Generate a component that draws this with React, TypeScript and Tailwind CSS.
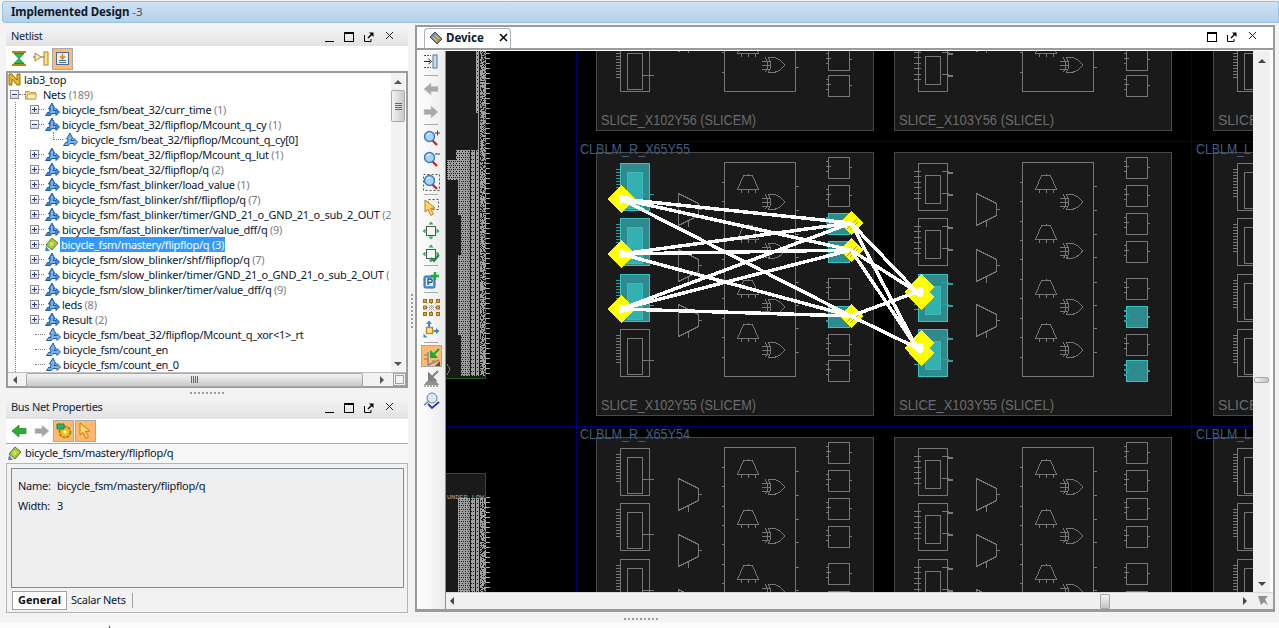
import React from "react";

const FONT = "[font-family:'Noto_Sans','Liberation_Sans',sans-serif]";

/* ---------- small icons ---------- */
function NetIcon({ leaf = false, bus = false }: { leaf?: boolean; bus?: boolean }) {
  const fill = bus ? "#a8c83c" : leaf ? "#7fb4ea" : "#3f8ad8";
  const stroke = bus ? "#5f7f1c" : "#1c5aa6";
  if (bus) {
    return (
      <svg width="14" height="15" viewBox="0 0 14 15" className="shrink-0">
        <path d="M7 1 L13 6 L7 13 L1 8 Z" fill={fill} stroke={stroke} />
        <path d="M5 6h4M5 8h3" stroke="#e8f4b0" fill="none" />
        <path d="M1 9 L0 14 L5 14 Z" fill="#3f8ad8" />
      </svg>
    );
  }
  return (
    <svg width="15" height="15" viewBox="0 0 15 15" className="shrink-0">
      <path d="M0.5 13.5 L3 10 L4.5 11 L5 7 L3.5 7 L7 1 L10 7 L8.5 7 L8 8.5 L11 8.5 L11 6.5 L14.5 10 L11 13.5 L11 11.5 L7 11.5 L5.5 13.5 Z" fill={fill} stroke={stroke} strokeWidth="1" />
      {!leaf && <path d="M7 4v5M5 10h5" stroke="#b6dcff" fill="none" />}
    </svg>
  );
}

function Expander({ minus = false }: { minus?: boolean }) {
  return (
    <span className="relative w-[9px] h-[9px] shrink-0 border border-[#8c8c9c] bg-[linear-gradient(#ffffff,#d8d8e4)] flex items-center justify-center">
      <span className="block w-[5px] h-[1px] bg-[#28408c]" />
      {!minus && <span className="absolute left-[3px] top-[1px] w-[1px] h-[5px] bg-[#28408c]" />}
    </span>
  );
}

function WinButtons({ first = true }: { first?: boolean }) {
  return (
    <div className="flex items-center h-full">
      {first && <span className="block w-[9px] h-[1px] bg-black mt-[10px] mr-[10px]" />}
      <span className="block w-[10px] h-[10px] border border-black border-t-2 mr-[10px]" />
      <svg width="10" height="10" viewBox="0 0 10 10" className="mr-[11px]">
        <path d="M0.5 3v6.500h6.500V7" stroke="#000" fill="none" />
        <path d="M4 6 L8 2" stroke="#000" strokeWidth="1.400" />
        <path d="M5 0.500h4.500V5 Z" fill="#000" />
      </svg>
      <svg width="9" height="9" viewBox="0 0 9 9" className="mr-[14px] -mt-[2px]">
        <path d="M1 1 L8 8 M8 1 L1 8" stroke="#222" strokeWidth="1" />
      </svg>
    </div>
  );
}

function PanelHeader({ title, className = "h-[19px]" }: { title: string; className?: string }) {
  return (
    <div className={`flex items-center justify-between bg-[linear-gradient(#f4f4f4,#e2e2e2)] pl-[5px] text-[11px] tracking-[-0.3px] text-[#14243f] ${className}`}>
      <span>{title}</span>
      <WinButtons />
    </div>
  );
}

function ArrowIcon({ color, dark, left }: { color: string; dark: string; left: boolean }) {
  return (
    <svg width="16" height="14" viewBox="0 0 16 14">
      <path
        d={left ? "M1 7 L8 1 L8 4.500 L15 4.500 L15 9.500 L8 9.500 L8 13 Z" : "M15 7 L8 1 L8 4.500 L1 4.500 L1 9.500 L8 9.500 L8 13 Z"}
        fill={color}
        stroke={dark}
        strokeWidth="0.700"
      />
    </svg>
  );
}

function Magnifier({ sign }: { sign: "+" | "-" | "fit" }) {
  return (
    <svg width="17" height="17" viewBox="0 0 17 17">
      {sign === "fit" && <rect x="0.500" y="0.500" width="16" height="16" fill="none" stroke="#555" strokeDasharray="2 2" />}
      <path d="M9 10 L14 15" stroke="#c8281e" strokeWidth="2.400" />
      <circle cx="6.500" cy="6.500" r="5" fill="#a8d4f4" stroke="#3c78c0" strokeWidth="1.400" />
      <path d="M4 5 Q5 3.500 7 3.500" stroke="#fff" fill="none" />
      {sign === "+" && <path d="M12 3h5M14.500 0.500v5" stroke="#444" />}
      {sign === "-" && <path d="M12 3h5" stroke="#444" />}
    </svg>
  );
}

function Cursor({ dashed = false }: { dashed?: boolean }) {
  return (
    <svg width="16" height="18" viewBox="0 0 16 18">
      {dashed && <rect x="5.500" y="0.500" width="10" height="10" fill="none" stroke="#555" strokeDasharray="2 2" />}
      <path d="M2 1 L2 13 L5 10.500 L8 16.500 L10.500 15 L7.500 9.500 L12 9 Z" fill="#ffd866" stroke="#c87818" />
    </svg>
  );
}

function FitIcon({ check = false }: { check?: boolean }) {
  return (
    <svg width="18" height="19" viewBox="0 0 18 19">
      <rect x="4.500" y="5.500" width="9" height="9" fill="#f4f4f4" stroke="#555" />
      <path d="M9 0.500 L11.500 3.500 L6.500 3.500 Z M9 18.500 L11.500 15.500 L6.500 15.500 Z M0.500 10 L3.500 7.500 L3.500 12.500 Z M17.500 10 L14.500 7.500 L14.500 12.500 Z" fill="#1cb44c" />
      {check && <path d="M9 14 L12 17 L17 11" stroke="#1c8c3c" strokeWidth="2" fill="none" />}
    </svg>
  );
}

function ToolIcon({ kind }: { kind: string }) {
  switch (kind) {
    case "pin":
      return (
        <svg width="14" height="15" viewBox="0 0 14 15">
          <rect x="9" y="1" width="4" height="13" fill="#c8dcf0" stroke="#5878a8" />
          <path d="M0 7.500h6" stroke="#222" />
          <path d="M4.500 5 L7.500 7.500 L4.500 10" stroke="#222" fill="none" />
          <path d="M0 1.500h7M0 13.500h7" stroke="#555" strokeDasharray="2 1" />
        </svg>
      );
    case "left":
      return <ArrowIcon color="#a8a8a8" dark="#c8c8c8" left />;
    case "right":
      return <ArrowIcon color="#a8a8a8" dark="#c8c8c8" left={false} />;
    case "zin":
      return <Magnifier sign="+" />;
    case "zout":
      return <Magnifier sign="-" />;
    case "zfit":
      return <Magnifier sign="fit" />;
    case "select":
      return <Cursor dashed />;
    case "fit":
      return <FitIcon />;
    case "fitc":
      return <FitIcon check />;
    case "prop":
      return (
        <svg width="17" height="18" viewBox="0 0 17 18">
          <rect x="1" y="5" width="11" height="12" rx="1.500" fill="#5c9ce0" stroke="#2c64b0" />
          <rect x="3" y="7" width="7" height="8" fill="#e4f0fc" />
          <path d="M5 14V8h2.500a1.500 1.500 0 0 1 0 3.500H5" stroke="#1c4c98" fill="none" strokeWidth="1.300" />
          <path d="M12 1v8M8 5h8" stroke="#18b040" strokeWidth="2.400" />
        </svg>
      );
    case "nodes":
      return (
        <svg width="17" height="17" viewBox="0 0 17 17">
          <path d="M3 3 L14 14 M14 3 L3 14 M8.500 2v13M2 8.500h13" stroke="#888" strokeDasharray="1 1" />
          <g fill="#e8a830" stroke="#9c6c1c">
            <rect x="0.500" y="0.500" width="3" height="3" />
            <rect x="6.500" y="0.500" width="3" height="3" />
            <rect x="13.500" y="0.500" width="3" height="3" />
            <rect x="0.500" y="7" width="3" height="3" />
            <rect x="13.500" y="7" width="3" height="3" />
            <rect x="0.500" y="13.500" width="3" height="3" />
            <rect x="6.500" y="13.500" width="3" height="3" />
            <rect x="13.500" y="13.500" width="3" height="3" />
          </g>
        </svg>
      );
    case "move":
      return (
        <svg width="17" height="18" viewBox="0 0 17 18">
          <path d="M6 0.500 L9 4 L7 4 L7 7 L5 7 L5 4 L3 4 Z" fill="#3c88d8" />
          <path d="M16.500 11 L13 8 L13 10 L10.500 10 L10.500 12 L13 12 L13 14 Z" fill="#3c88d8" />
          <path d="M0.500 17.500 L0.500 13.500 L4.500 17.500 Z" fill="#3c88d8" />
          <rect x="3.500" y="7.500" width="6" height="6" fill="#ffe890" stroke="#b88c20" strokeWidth="1.400" />
        </svg>
      );
    case "route":
      return (
        <svg width="19" height="19" viewBox="0 0 19 19">
          <path d="M6 5 L6 18 L17 13" stroke="#7c7c7c" fill="none" strokeWidth="1.200" />
          <path d="M2 8h4M2 12h4M10 14h3" stroke="#7c7c7c" />
          <path d="M17 2 L11 8 M9 5 L9 10 L14 10 Z" stroke="#18a838" fill="#18b040" strokeWidth="1.800" />
          <path d="M18 14 L18 19 L13 19 Z" fill="#555" />
        </svg>
      );
    case "unroute":
      return (
        <svg width="17" height="17" viewBox="0 0 17 17">
          <path d="M15 1 L8 8 M6 4 L6 10 L12 10 Z" stroke="#808080" fill="#808080" strokeWidth="2" />
          <path d="M1 15 L4 11 L13 11 L16 15 Z" fill="#909090" />
          <path d="M1 16h15" stroke="#606060" strokeDasharray="2 1" />
        </svg>
      );
    case "check":
      return (
        <svg width="17" height="18" viewBox="0 0 17 18">
          <circle cx="9" cy="6" r="5" fill="#dce6f0" stroke="#708098" />
          <path d="M6 9 L1 13" stroke="#708098" strokeWidth="1.600" />
          <path d="M5 12 L9 16 L16 10" stroke="#2c3cb0" strokeWidth="2" fill="none" />
        </svg>
      );
    default:
      return null;
  }
}

/* ---------- device canvas drawing ---------- */
const GRID = "#777777";
const TEAL_STROKE = "#35c4c4";
const TEAL_FILL = "#2e8a8c";
const TEAL_INNER = "#33b0b2";

function Lut({ x, y, teal, slicel }: { x: number; y: number; teal: boolean; slicel: boolean }) {
  const c = teal ? TEAL_STROKE : GRID;
  const stub = teal ? "#2fa0a0" : GRID;
  const ys = slicel ? [8, 13, 19, 24, 30, 35] : [6, 9, 12, 15, 18, 21, 24, 27, 30, 33];
  return (
    <g>
      {ys.map((d) => (
        <path key={d} d={`M${x - 4} ${y + d + 0.5}h${slicel ? 7 : 4}`} stroke={stub} />
      ))}
      <rect x={x + 0.5} y={y + 0.5} width={29} height={47} fill={teal ? TEAL_FILL : "none"} stroke={c} />
      <rect x={x + 7.5} y={y + (slicel ? 12.5 : 9.5)} width={15} height={slicel ? 28 : 36} fill={teal ? TEAL_INNER : "none"} stroke={teal ? "#3fb8b8" : GRID} />
      {slicel ? (
        <path d={`M${x + 24} ${y + 8}h6v2h4v-1h-4v-1ZM${x + 24} ${y + 30}h6v2h4v-1h-4v-1Z`} stroke={stub} fill={stub} />
      ) : (
        <path d={`M${x + 22} ${y + 31.5}h12`} stroke={stub} />
      )}
    </g>
  );
}

function Mux({ x, y, h }: { x: number; y: number; h: number }) {
  return (
    <path
      d={`M${x + 0.5} ${y + 0.5}L${x + 20.5} ${y + 10.5}V${y + h - 10.5}L${x + 0.5} ${y + h - 0.5}ZM${x + 20.5} ${y + h / 2}h3M${x + 10.5} ${y + h - 5}v6`}
      fill="none"
      stroke={GRID}
    />
  );
}

function Adder({ x, y }: { x: number; y: number }) {
  return (
    <path
      d={`M${x + 0.5} ${y + 15.5}L${x + 6.5} ${y + 1.5}H${x + 15.5}L${x + 21.5} ${y + 15.5}ZM${x + 11.5} ${y + 1.5}v-2M${x + 4.5} ${y + 15.5}v3M${x + 11.5} ${y + 15.5}v3M${x + 18.5} ${y + 15.5}v3`}
      fill="none"
      stroke={GRID}
    />
  );
}

function Xor({ x, y }: { x: number; y: number }) {
  return (
    <path
      d={`M${x + 6.5} ${y + 0.5}H${x + 12}Q${x + 19} ${y + 2} ${x + 22.5} ${y + 8}Q${x + 19} ${y + 14} ${x + 12} ${y + 15.5}H${x + 6.5}Q${x + 11} ${y + 8} ${x + 6.5} ${y + 0.5}ZM${x + 3.5} ${y + 0.5}Q${x + 8} ${y + 8} ${x + 3.5} ${y + 15.5}M${x} ${y + 4.5}h8M${x} ${y + 8.5}h9M${x} ${y + 12.5}h8`}
      fill="none"
      stroke={GRID}
    />
  );
}

function FF({ x, y, h, teal }: { x: number; y: number; h: number; teal: boolean }) {
  const c = teal ? TEAL_STROKE : GRID;
  const s = teal ? "#2fa0a0" : GRID;
  return (
    <g>
      <rect x={x + 0.5} y={y + 0.5} width={21} height={h} fill={teal ? TEAL_FILL : "none"} stroke={c} />
      <path d={`M${x - 2} ${y + 4.5}h2M${x - 2} ${y + 9.5}h5M${x - 2} ${y + 14.5}h3M${x + 22} ${y + 10.5}h2`} stroke={s} strokeWidth={teal ? 2 : 1} />
    </g>
  );
}

const CARRY_L = [30, 49, 69, 88, 107, 127, 146, 166, 185, 205];
const CARRY_R = [34, 58, 82, 105, 130, 153, 176, 200];
const ADD_Y = [22, 72, 127, 171];
const XOR_Y = [42, 91, 147, 190];
const FF_Y = [5, 33, 61, 89, 126, 154, 182, 208];
const LUT_Y = [11, 66, 122, 177];

function Slice({ ox, oy, label, slicel, lutTeal = [], ffTeal = [] }: { ox: number; oy: number; label?: string; slicel: boolean; lutTeal?: number[]; ffTeal?: number[] }) {
  return (
    <g>
      <rect x={ox + 0.5} y={oy + 0.5} width={277} height={263} fill="#1a1a1a" stroke="#484848" />
      {LUT_Y.map((d, i) => (
        <Lut key={d} x={ox + 24} y={oy + d} teal={lutTeal.includes(i)} slicel={slicel} />
      ))}
      <Mux x={ox + 82} y={oy + 41} h={33} />
      <Mux x={ox + 82} y={oy + 97} h={33} />
      <Mux x={ox + 82} y={oy + 152} h={33} />
      <rect x={ox + 128.5} y={oy + 10.5} width={71} height={214} fill="none" stroke={GRID} />
      {CARRY_L.map((d) => (
        <path key={d} d={`M${ox + 126} ${oy + d + 0.5}h3`} stroke={GRID} />
      ))}
      {CARRY_R.map((d) => (
        <path key={d} d={`M${ox + 200} ${oy + d + 0.5}h3`} stroke={GRID} />
      ))}
      {ADD_Y.map((d) => (
        <Adder key={d} x={ox + 141} y={oy + d} />
      ))}
      {XOR_Y.map((d) => (
        <Xor key={d} x={ox + 166} y={oy + d} />
      ))}
      {FF_Y.map((d, i) => (
        <FF key={d} x={ox + 232} y={oy + d} h={21} teal={ffTeal.includes(i)} />
      ))}
      {label && (
        <text x={ox + 5} y={oy + 258} fontSize="14" fill="#6c6c6c" fontFamily="'Liberation Sans',sans-serif" textLength={label.length > 6 ? 155 : undefined} lengthAdjust="spacingAndGlyphs">
          {label}
        </text>
      )}
    </g>
  );
}

function Diamond({ x, y, r }: { x: number; y: number; r: number }) {
  return <polygon points={`${x},${y - r} ${x + r},${y} ${x},${y + r} ${x - r},${y}`} fill="#ffff00" />;
}

function garblePath() {
  const segs: [number, number, number][] = [
    [51, 113, 475], [113, 150, 478], [150, 160, 456], [160, 180, 447], [180, 215, 458],
    [215, 255, 461], [255, 335, 458], [335, 376, 461], [498, 592, 458],
  ];
  let d = "";
  let seed = 7;
  const rnd = () => {
    seed = (seed * 1103515245 + 12345) & 0x7fffffff;
    return (seed >> 16) % 100;
  };
  for (const [y0, y1, x0] of segs) {
    for (let y = y0; y < y1; y++) {
      let run = -1;
      for (let x = x0; x <= 485; x++) {
        let on: boolean;
        if (x === 470 || x === 475 || x === 479) on = false;
        else if (x > 479) on = rnd() < 68;
        else if (x > 470) on = y % 4 !== 3 || x % 2 === 0;
        else on = y % 4 === 3 ? x % 3 !== 0 : y % 4 === 1 ? x % 2 === 0 : true;
        if (on && run < 0) run = x;
        if ((!on || x === 485) && run >= 0) {
          d += `M${run} ${y + 0.5}H${on ? x + 1 : x}`;
          run = -1;
        }
      }
    }
  }
  return d;
}
const GARBLE = garblePath();

function stubPath() {
  let d = "";
  for (let y = 53; y < 378; y += 5) d += `M486 ${y + 0.5}h4`;
  for (let y = 497; y < 592; y += 5) d += `M486 ${y + 0.5}h4`;
  return d;
}
const STUBS = stubPath();

const SRC = [[621, 199], [621, 254], [621, 309]];
const MID = [[851, 223], [851, 250], [851, 316]];
const DST = [[917, 292], [917, 348]];

function DeviceCanvas() {
  return (
    <svg viewBox="446 51 807 541" width="807" height="541" shapeRendering="crispEdges" className="block bg-black">
      <rect x="446" y="51" width="40" height="327" fill="#1a1a1a" />
      <rect x="446" y="473" width="40" height="119" fill="#1a1a1a" />
      <path d="M485.500 51V378H446M446 473.500H485.500V592" fill="none" stroke="#1c5a1c" />
      <path d="M576.500 51V592M1191.500 51V592M576 141.500H1253M446 426.500H1253" stroke="#00007c" fill="none" />
      <path d={GARBLE} stroke="#a0a0a0" fill="none" />
      <path d={STUBS} stroke="#a8b8a8" fill="none" />
      <path d="M447 364l3 5l-3 6" fill="none" stroke="#777" />
      <text x="447" y="499" fontSize="6" fill="#a8a8a8" fontFamily="'Liberation Mono',monospace" textLength={37} lengthAdjust="spacingAndGlyphs">UNDER LOW</text>

      {[-133, 152, 437].map((oy, row) => {
        const n = 56 - row;
        const vis = row !== 2;
        return (
          <g key={oy}>
            <Slice
              ox={596}
              oy={oy}
              slicel={false}
              label={vis ? `SLICE_X102Y${n} (SLICEM)` : undefined}
              lutTeal={row === 1 ? [0, 1, 2] : []}
              ffTeal={row === 1 ? [2, 3, 5] : []}
            />
            <Slice
              ox={894}
              oy={oy}
              slicel
              label={vis ? `SLICE_X103Y${n} (SLICEL)` : undefined}
              lutTeal={row === 1 ? [2, 3] : []}
              ffTeal={row === 1 ? [5, 7] : []}
            />
            <Slice ox={1213} oy={oy} slicel={false} label={vis ? "SLICE" : undefined} />
          </g>
        );
      })}

      <g fontSize="14" fill="#3f5f80" fontFamily="'Liberation Sans',sans-serif">
        <text x="580" y="154" textLength={110} lengthAdjust="spacingAndGlyphs">CLBLM_R_X65Y55</text>
        <text x="580" y="439" textLength={110} lengthAdjust="spacingAndGlyphs">CLBLM_R_X65Y54</text>
        <text x="1196" y="154" textLength={55} lengthAdjust="spacingAndGlyphs">CLBLM_L</text>
        <text x="1196" y="439" textLength={55} lengthAdjust="spacingAndGlyphs">CLBLM_L</text>
      </g>

      {SRC.map(([x, y]) => (
        <Diamond key={y} x={x} y={y} r={14} />
      ))}
      {MID.map(([x, y]) => (
        <g key={y}>
          <Diamond x={x} y={y} r={12} />
          <path d={`M${x - 4} ${y + 6}L${x + 6} ${y - 4}M${x - 1} ${y + 7}L${x + 7} ${y - 1}`} stroke="#b4a800" />
        </g>
      ))}
      {DST.map(([x, y]) => (
        <g key={y}>
          <Diamond x={x + 4} y={y - 5} r={13} />
          <Diamond x={x} y={y} r={13} />
          <Diamond x={x + 4} y={y + 5} r={13} />
        </g>
      ))}
      <g stroke="#ffffff" strokeWidth="3.500">
        {SRC.flatMap(([x1, y1]) =>
          MID.map(([x2, y2]) => <line key={`${y1}-${y2}`} x1={x1} y1={y1} x2={x2} y2={y2} />)
        )}
        {MID.flatMap(([x1, y1]) =>
          DST.map(([x2, y2]) => <line key={`${y1}-${y2}`} x1={x1} y1={y1} x2={x2} y2={y2} />)
        )}
      </g>
      <g fill="#ffffff">
        {SRC.map(([x, y]) => (
          <polygon key={y} points={`${x - 2},${y - 4} ${x + 6},${y - 3} ${x + 13},${y - 1} ${x + 13},${y + 1} ${x + 6},${y + 3} ${x - 2},${y + 4}`} />
        ))}
        {DST.map(([x, y]) => (
          <polygon key={y} points={`${x - 3},${y} ${x + 1},${y - 5} ${x + 5},${y - 5} ${x + 7},${y} ${x + 5},${y + 5} ${x + 1},${y + 5}`} />
        ))}
      </g>
    </svg>
  );
}

/* ---------- tree ---------- */
type RowDef = { t: string; c?: string; kind: "l2" | "l2open" | "leaf" | "l3"; sel?: boolean };
const ROWS: RowDef[] = [
  { t: "bicycle_fsm/beat_32/curr_time", c: "(1)", kind: "l2" },
  { t: "bicycle_fsm/beat_32/flipflop/Mcount_q_cy", c: "(1)", kind: "l2open" },
  { t: "bicycle_fsm/beat_32/flipflop/Mcount_q_cy[0]", kind: "l3" },
  { t: "bicycle_fsm/beat_32/flipflop/Mcount_q_lut", c: "(1)", kind: "l2" },
  { t: "bicycle_fsm/beat_32/flipflop/q", c: "(2)", kind: "l2" },
  { t: "bicycle_fsm/fast_blinker/load_value", c: "(1)", kind: "l2" },
  { t: "bicycle_fsm/fast_blinker/shf/flipflop/q", c: "(7)", kind: "l2" },
  { t: "bicycle_fsm/fast_blinker/timer/GND_21_o_GND_21_o_sub_2_OUT", c: "(2", kind: "l2" },
  { t: "bicycle_fsm/fast_blinker/timer/value_dff/q", c: "(9)", kind: "l2" },
  { t: "bicycle_fsm/mastery/flipflop/q", c: "(3)", kind: "l2", sel: true },
  { t: "bicycle_fsm/slow_blinker/shf/flipflop/q", c: "(7)", kind: "l2" },
  { t: "bicycle_fsm/slow_blinker/timer/GND_21_o_GND_21_o_sub_2_OUT", c: "(", kind: "l2" },
  { t: "bicycle_fsm/slow_blinker/timer/value_dff/q", c: "(9)", kind: "l2" },
  { t: "leds", c: "(8)", kind: "l2" },
  { t: "Result", c: "(2)", kind: "l2" },
  { t: "bicycle_fsm/beat_32/flipflop/Mcount_q_xor<1>_rt", kind: "leaf" },
  { t: "bicycle_fsm/count_en", kind: "leaf" },
  { t: "bicycle_fsm/count_en_0", kind: "leaf" },
];

function TreeRow({ r }: { r: RowDef }) {
  return (
    <div className="h-[15px] flex items-center whitespace-nowrap">
      <span className="w-[7px] shrink-0" />
      <span className="w-[1px] h-full shrink-0 border-l border-dotted border-[#808080]" />
      {r.kind === "l3" ? (
        <>
          <span className="w-[37px] shrink-0" />
          <span className="w-[10px] h-[8px] -mt-[8px] shrink-0 border-l border-b border-dotted border-[#808080]" />
          <NetIcon leaf />
          <span className="w-[2px] shrink-0" />
        </>
      ) : (
        <>
          <span className="w-[14px] shrink-0" />
          {r.kind === "leaf" ? (
            <span className="w-[4px] shrink-0" />
          ) : (
            <Expander minus={r.kind === "l2open"} />
          )}
          <span className={`${r.kind === "leaf" ? "w-[10px] ml-[1px]" : "w-[5px]"} h-0 shrink-0 border-t border-dotted border-[#808080]`} />
          <span className="w-[1px] shrink-0" />
          {r.sel ? <NetIcon bus /> : <NetIcon leaf={r.kind === "leaf"} />}
          <span className="w-[1px] shrink-0" />
        </>
      )}
      <span className={`pl-[1px] pr-[1px] h-[15px] leading-[15px] ${r.sel ? "bg-[#3399ff] text-white" : "text-[#0c1830]"}`}>
        {r.t}
        {r.c && <span className={r.sel ? "text-white" : "text-[#808080]"}> {r.c}</span>}
      </span>
    </div>
  );
}

function TreeBox() {
  return (
    <div className="h-[317px] border-2 border-[#9a9aa0] bg-white flex flex-col text-[11px] leading-[15px] tracking-[-0.27px]">
      <div className="flex h-[299px]">
        <div className="w-[383px] overflow-hidden">
          <div className="-mt-[1px]">
            <div className="h-[15px] flex items-center whitespace-nowrap">
              <svg width="14" height="13" viewBox="0 0 14 13" className="shrink-0">
                <path d="M1 1h3l5 6V1h3v11H9L4 6v6H1Z" fill="#e8b820" stroke="#8c6c10" />
              </svg>
              <span className="ml-[2px] text-[#0c1830]">lab3_top</span>
            </div>
            <div className="h-[15px] flex items-center whitespace-nowrap">
              <span className="w-[2px] shrink-0" />
              <Expander minus />
              <span className="w-[6px] h-0 shrink-0 border-t border-dotted border-[#808080]" />
              <svg width="12" height="11" viewBox="0 0 12 11" className="shrink-0">
                <path d="M0.500 2.500h4l1 1h5v6.500h-10Z" fill="#f8dc90" stroke="#c49c40" />
                <path d="M1.500 10 L3 5h8.500l-1 5Z" fill="#fff0c0" stroke="#c49c40" />
              </svg>
              <span className="ml-[6px] text-[#0c1830]">Nets</span>
              <span className="ml-[3px] text-[#808080]">(189)</span>
            </div>
            {ROWS.map((r) => (
              <TreeRow key={r.t} r={r} />
            ))}
          </div>
        </div>
        <div className="w-[14px] bg-[#f2f2f2] flex flex-col items-center">
          <span className="mt-[7px] w-0 h-0 border-x-[4px] border-x-transparent border-b-[4px] border-b-[#555]" />
          <div className="mt-[6px] w-[14px] h-[32px] rounded-[2px] border border-[#a8a8a8] bg-[linear-gradient(90deg,#f4f4f4,#c8c8c8)] flex flex-col items-center justify-center gap-[1px]">
            <span className="block w-[7px] h-[1px] bg-[#666]" />
            <span className="block w-[7px] h-[1px] bg-[#666]" />
            <span className="block w-[7px] h-[1px] bg-[#666]" />
            <span className="block w-[7px] h-[1px] bg-[#666]" />
          </div>
          <span className="mt-auto mb-[6px] w-0 h-0 border-x-[4px] border-x-transparent border-t-[4px] border-t-[#555]" />
        </div>
      </div>
      <div className="h-[14px] flex items-center bg-[#f2f2f2] border-t border-[#c0c0c0]">
        <span className="ml-[5px] w-0 h-0 border-y-[4px] border-y-transparent border-r-[4px] border-r-[#555]" />
        <div className="ml-[9px] w-[337px] h-[14px] rounded-[2px] border border-[#a8a8a8] bg-[linear-gradient(#f4f4f4,#c8c8c8)] flex items-center justify-center gap-[1px]">
          <span className="block w-[1px] h-[7px] bg-[#666]" />
          <span className="block w-[1px] h-[7px] bg-[#666]" />
          <span className="block w-[1px] h-[7px] bg-[#666]" />
          <span className="block w-[1px] h-[7px] bg-[#666]" />
        </div>
        <span className="ml-[17px] w-0 h-0 border-y-[4px] border-y-transparent border-l-[4px] border-l-[#555]" />
        <span className="ml-[9px] w-[13px] h-[13px] border border-[#9aa0a8] p-[1px]">
          <span className="block w-full h-full border border-[#9aa0a8]" />
        </span>
      </div>
    </div>
  );
}

function Active({ children, className = "" }: { children: React.ReactNode; className?: string }) {
  return (
    <span className={`w-[21px] h-[22px] flex items-center justify-center border border-[#a8a8a8] bg-[#ffb870] ${className}`}>
      {children}
    </span>
  );
}

function DotsH({ className = "" }: { className?: string }) {
  return <div className={`h-[2px] w-[34px] bg-[repeating-linear-gradient(90deg,#9a9a9a_0,#9a9a9a_2px,transparent_2px,transparent_4px)] ${className}`} />;
}

const TOOLS: { k: string; c: string }[] = [
  { k: "pin", c: "-mt-[1px]" },
  { k: "sep", c: "mt-[3px]" },
  { k: "left", c: "mt-[2px]" },
  { k: "right", c: "mt-[1px]" },
  { k: "sep", c: "mt-[1px]" },
  { k: "zin", c: "mt-[2px]" },
  { k: "zout", c: "-mt-[1px]" },
  { k: "zfit", c: "mt-[1px]" },
  { k: "sep", c: "mt-[1px]" },
  { k: "select", c: "mt-[2px]" },
  { k: "fit", c: "" },
  { k: "fitc", c: "mt-[1px]" },
  { k: "sep", c: "mt-[1px]" },
  { k: "prop", c: "mt-[3px]" },
  { k: "sep", c: "mt-[1px]" },
  { k: "nodes", c: "mt-[3px]" },
  { k: "move", c: "" },
  { k: "sep", c: "mt-[2px]" },
  { k: "route", c: "mt-[2px]" },
  { k: "unroute", c: "" },
  { k: "check", c: "mt-[1px]" },
];

export default function App() {
  return (
    <div className={`w-[1279px] h-[628px] overflow-hidden bg-[#f3f3f3] ${FONT} flex flex-col`}>
      {/* title strip */}
      <div className="h-[22px] mt-[1px] ml-[2px] shrink-0 border border-[#9cc0e0] rounded-l-[3px] bg-[linear-gradient(#cfe2f4,#b4d0ea)] flex items-center pl-[8px] text-[11.500px] tracking-[-0.1px] text-[#10182c]">
        <span className="font-bold">Implemented Design</span>
        <span className="ml-[3px] text-[#44546c]">-3</span>
      </div>

      <div className="flex h-[590px] shrink-0 mt-[2px]">
        {/* left column */}
        <div className="w-[402px] ml-[6px] shrink-0 flex flex-col pt-[2px]">
          <PanelHeader title="Netlist" />
          <div className="h-[25px] bg-white flex items-center pl-[5px]">
            <svg width="16" height="15" viewBox="0 0 16 15" className="mr-[6px]">
              <path d="M1 1h14M1 14h14" stroke="#b08820" strokeWidth="2" />
              <path d="M3 2.500h10L8 7.500ZM3 12.500h10L8 7.500Z" fill="#28c050" stroke="#1c8c3c" />
            </svg>
            <svg width="16" height="15" viewBox="0 0 16 15" className="mr-[3px]">
              <rect x="11" y="1" width="4" height="13" fill="#ffe080" stroke="#a88820" />
              <path d="M2 2 L8 6 L2 10 Z" fill="#fff0b0" stroke="#a88820" />
              <path d="M0 6h2M8 6h3" stroke="#666" />
            </svg>
            <Active>
              <svg width="15" height="15" viewBox="0 0 15 15">
                <rect x="1.500" y="1.500" width="12" height="12" fill="#e8f0f8" stroke="#4a6c94" />
                <path d="M4 9.500h7M4 11.500h7" stroke="#4a6c94" />
                <path d="M7.500 2.500v4M5 5l2.500 3L10 5" stroke="#d89018" strokeWidth="1.600" fill="none" />
              </svg>
            </Active>
          </div>
          <TreeBox />
          <div className="h-[10px] flex items-center justify-center">
            <DotsH />
          </div>
          <PanelHeader title="Bus Net Properties" className="h-[21px] pb-[2px]" />
          <div className="h-[25px] bg-white flex items-center pl-[5px] border-b border-[#a8a8a8]">
            <ArrowIcon color="#28b02c" dark="#1c8020" left />
            <span className="w-[7px]" />
            <ArrowIcon color="#a4a4a4" dark="#c8c8c8" left={false} />
            <span className="w-[3px]" />
            <Active>
              <svg width="16" height="16" viewBox="0 0 16 16">
                <circle cx="9" cy="9" r="5.500" fill="#e8c020" stroke="#9c7810" strokeDasharray="3 1" strokeWidth="1.600" />
                <circle cx="9" cy="9" r="1.800" fill="#fff0a0" />
                <path d="M1 1h7v5H1Z" fill="#30b060" stroke="#20804c" />
              </svg>
            </Active>
            <span className="w-[1px]" />
            <Active>
              <Cursor />
            </Active>
          </div>
          <div className="h-[19px] bg-[#f6f6f6] flex items-center pl-[2px] text-[11px] tracking-[-0.27px] text-[#0c1830]">
            <NetIcon bus />
            <span className="ml-[3px]">bicycle_fsm/mastery/flipflop/q</span>
          </div>
          <div className="h-[150px] border border-[#b4b4b4] bg-[#f2f2f2] pl-[4px] pr-[3px] pt-[4px] flex flex-col text-[11px] text-[#0c1830]">
            <div className="h-[120px] border border-[#7e8a94] bg-[#efefef] pl-[6px] pt-[7px] tracking-[-0.27px]">
              <div className="flex h-[20px] items-center">
                <span className="w-[39px]">Name:</span>
                <span>bicycle_fsm/mastery/flipflop/q</span>
              </div>
              <div className="flex h-[20px] items-center">
                <span className="w-[39px]">Width:</span>
                <span>3</span>
              </div>
            </div>
            <div className="flex items-center mt-[3px] h-[19px]">
              <span className="ml-[1px] w-[55px] h-[19px] flex items-center justify-center border border-[#a0a0a0] bg-white font-bold text-[#101010]">General</span>
              <span className="ml-[4px] h-[15px] pr-[6px] border-r border-[#a0a0a0] flex items-center tracking-[-0.27px]">Scalar Nets</span>
            </div>
          </div>
        </div>

        {/* splitter */}
        <div className="w-[7px] shrink-0 flex items-center justify-center">
          <div className="h-[34px] w-[2px] -mt-[18px] bg-[repeating-linear-gradient(#9a9a9a_0,#9a9a9a_2px,transparent_2px,transparent_4px)]" />
        </div>

        {/* device panel */}
        <div className="w-[860px] shrink-0 flex flex-col">
          <div className="h-[587px] border-2 border-[#9a9a9a] border-b-[3px] bg-white flex flex-col -mb-[1px]">
            <div className="h-[21px] shrink-0 flex items-end justify-between relative">
              <div className="ml-[7px] w-[87px] h-[20px] rounded-t-[4px] border border-b-0 border-[#a8b0b8] bg-white flex items-center pl-[4px] pb-[2px] text-[11.500px] font-bold text-[#0c1830] -mt-[2px]">
                <svg width="14" height="14" viewBox="0 0 14 14" className="shrink-0">
                  <path d="M1 6 L6 1 L13 8 L8 13 Z" fill="#7c8ca8" stroke="#3c4c68" />
                  <path d="M4 6 L8 10 M6 4 L10 8" stroke="#e8c040" strokeWidth="1.500" />
                </svg>
                <span className="ml-[3px]">Device</span>
                <svg width="9" height="9" viewBox="0 0 9 9" className="ml-[15px]">
                  <path d="M1 1 L8 8 M8 1 L1 8" stroke="#000" strokeWidth="1.500" />
                </svg>
              </div>
              <div className="h-[21px] flex pb-[2px] pr-[2px]">
                <WinButtons first={false} />
              </div>
            </div>
            <div className="h-[2px] shrink-0 bg-[#9a9a9a]" />
            <div className="h-[1px] shrink-0 bg-white" />
            <div className="flex flex-1 min-h-0">
              <div className="w-[29px] shrink-0 bg-[linear-gradient(90deg,#ffffff,#ececec)] border-r-[1px] border-[#8c8c8c] flex flex-col items-center">
                {TOOLS.map((t, i) =>
                  t.k === "sep" ? (
                    <span key={i} className={`block w-[14px] h-[1px] shrink-0 bg-[#a8a8a8] ${t.c}`} />
                  ) : t.k === "route" ? (
                    <span key={i} className={`block shrink-0 ${t.c}`}>
                      <Active>
                        <ToolIcon kind={t.k} />
                      </Active>
                    </span>
                  ) : (
                    <span key={i} className={`h-[22px] w-[22px] shrink-0 flex items-center justify-center ${t.c}`}>
                      <ToolIcon kind={t.k} />
                    </span>
                  )
                )}
              </div>
              <div className="flex flex-col flex-1 min-w-0">
                <div className="flex">
                  <DeviceCanvas />
                  <div className="w-[17px] bg-[#f0f0f0] flex flex-col items-center h-[541px]">
                    <span className="mt-[8px] w-0 h-0 border-x-[4px] border-x-transparent border-b-[4px] border-b-[#444]" />
                    <div className="mt-[314px] w-[15px] h-[6px] rounded-[2px] border border-[#a8a8a8] bg-[linear-gradient(90deg,#f4f4f4,#c4c4c4)]" />
                    <span className="mt-auto mb-[6px] w-0 h-0 border-x-[4px] border-x-transparent border-t-[4px] border-t-[#444]" />
                  </div>
                </div>
                <div className="flex-1 flex items-center bg-[#f0f0f0] border-t border-[#d8d8d8]">
                  <span className="ml-[4px] w-0 h-0 border-y-[4px] border-y-transparent border-r-[4px] border-r-[#444]" />
                  <div className="ml-[646px] w-[10px] h-[15px] rounded-[1px] border border-[#a8a8a8] bg-[linear-gradient(#f4f4f4,#c4c4c4)]" />
                  <span className="ml-[133px] w-0 h-0 border-y-[4px] border-y-transparent border-l-[4px] border-l-[#444]" />
                  <svg width="10" height="10" viewBox="0 0 10 10" className="ml-[11px]">
                    <path d="M0 0h10L7 3l3 7L6 6 3 9Z" fill="#909090" />
                  </svg>
                </div>
              </div>
            </div>
          </div>
        </div>
      </div>

      {/* bottom strip */}
      <div className="h-[7px] shrink-0 flex items-center justify-center pl-[2px]">
        <DotsH />
      </div>
      <div className="flex-1 bg-[#fbfbfb] flex items-end">
        <span className="block ml-[109px] w-[1px] h-[2px] bg-[#444]" />
      </div>
    </div>
  );
}
